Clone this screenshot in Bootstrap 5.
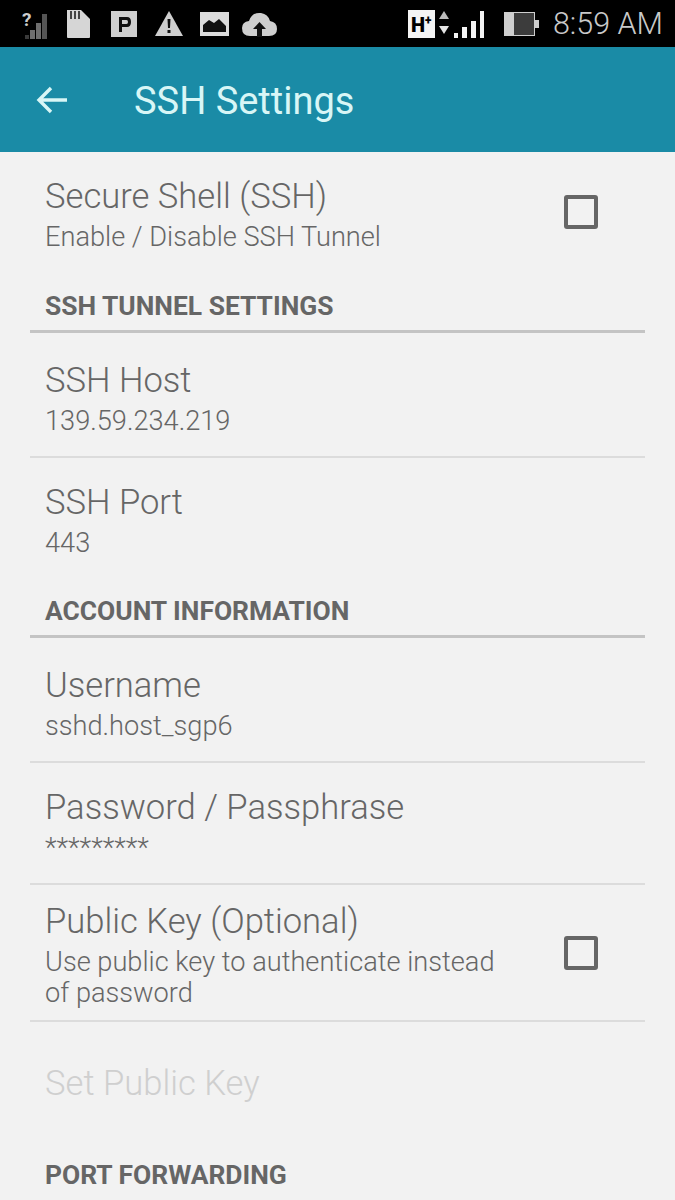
<!DOCTYPE html>
<html lang="en">
<head>
    <meta charset="UTF-8">
    <meta name="viewport" content="width=device-width, initial-scale=1.0">
    <title>SSH Settings</title>
    <link rel="stylesheet" href="https://cdn.jsdelivr.net/npm/bootstrap@5.3.3/dist/css/bootstrap.min.css">
    <style>
        html, body {
            height: 1200px;
            overflow: hidden;
        }

        body {
            background: #f2f2f2;
            font-family: Roboto, "Liberation Sans", sans-serif;
            color: #666;
        }

        .status-strip {
            height: 47px;
            background: #000;
            padding: 0 12px 0 22px;
        }

        .status-clock {
            color: #c9c9c9;
            font-size: 30.5px;
            font-weight: 300;
            line-height: 47px;
            margin-left: 14px;
        }

        .icon-signal { margin-right: 18px; }
        .icon-sd { margin-right: 20px; }
        .icon-parking { margin-right: 18px; }
        .icon-warning { margin-right: 17px; }
        .icon-picture { margin-right: 13px; }
        .icon-battery { margin-left: 19px; }

        .app-bar {
            height: 105px;
            background: #1a8ba6;
            color: #d8f6f6;
            padding-left: 36px;
        }

        .app-title {
            font-size: 38px;
            font-weight: 400;
            margin: 3px 0 0 66px;
            line-height: 1;
        }

        .pref-list {
            padding: 0 30px;
        }

        .pref-row {
            padding: 0 15px;
            border-bottom: 2px solid #dcdcdc;
        }

        .pref-row.no-line {
            border-bottom: 0;
        }

        .pref-name {
            font-size: 34.6px;
            font-weight: 300;
            line-height: 40px;
            color: #666;
        }

        .pref-value {
            font-size: 27.2px;
            font-weight: 300;
            line-height: 31px;
            margin-top: 5.5px;
            color: #666;
        }

        .pref-muted {
            color: #cfcfcf;
        }

        .pref-box {
            width: 34px;
            height: 34px;
            border: 4px solid #666;
            border-radius: 3px;
            flex: none;
            margin-right: 32px;
        }

        .section-name {
            height: 42px;
            padding: 3px 15px 0;
            font-size: 26.4px;
            font-weight: 700;
            line-height: 30px;
            color: #666;
        }

        .section-rule {
            height: 3px;
            background: #c4c4c4;
        }

        .h-shell { height: 136px; padding-top: 24px; }
        .h-item { height: 125px; padding-top: 27px; }
        .h-port { height: 135px; padding-top: 24px; }
        .h-pass { height: 122px; padding-top: 24px; }
        .h-key { height: 137px; padding-top: 16px; }
        .h-disabled { height: 135px; padding-top: 41px; }
        .box-shell { margin-top: 19px; }
        .box-key { margin-top: 35px; }
    </style>
</head>
<body>

    <div class="status-strip d-flex align-items-center">
        <svg width="26" height="30" viewBox="0 0 26 30" class="icon-signal">
            <path d="M3 26 h4 v4 h-4 Z" fill="#3a3a3a"/>
            <path d="M8 21 h5 v9 h-5 Z" fill="#6e6e6e"/>
            <path d="M14 14 h5 v16 h-5 Z" fill="#6e6e6e"/>
            <path d="M20 5 h5 v25 h-5 Z" fill="#555"/>
            <text x="0" y="17" font-family="Roboto" font-size="19" font-weight="700" fill="#ccc">?</text>
        </svg>
        <svg width="25" height="28" viewBox="0 0 25 28" class="icon-sd">
            <path d="M1 0 H15 L24 9 V27 Q24 28 23 28 H2 Q1 28 1 27 Z" fill="#d6d6d6"/>
            <path d="M4 1 h2 v8 h-2 Z M8 1 h2 v8 h-2 Z M12 1 h2 v8 h-2 Z" fill="#444"/>
        </svg>
        <svg width="26" height="26" viewBox="0 0 26 26" class="icon-parking">
            <rect width="26" height="26" fill="#cfcfcf"/>
            <path fill-rule="evenodd" d="M8 6 H16 Q20 6 20 11 Q20 16 16 16 H11 V21 H8 Z M11 9 V13 H15.5 Q17 13 17 11 Q17 9 15.5 9 Z" fill="#111"/>
        </svg>
        <svg width="28" height="26" viewBox="0 0 28 26" class="icon-warning">
            <path d="M14 0 L28 25 H0 Z" fill="#cfcfcf"/>
            <path d="M12.5 8 h3 l-.5 9 h-2 Z M12.5 19 h3 v3 h-3 Z" fill="#111"/>
        </svg>
        <svg width="29" height="24" viewBox="0 0 29 24" class="icon-picture">
            <rect width="29" height="24" fill="#dcdcdc"/>
            <path d="M3 20 V13 L9 8 L14 11 L19 7 L26 14 V20 Z" fill="#111"/>
        </svg>
        <svg width="35" height="26" viewBox="0 0 35 26">
            <path d="M8 25 Q0 25 0 17 Q0 11 7 10 Q10 1 19 2 Q26 3 28 10 Q35 11 35 18 Q35 25 27 25 Z" fill="#cfcfcf"/>
            <path d="M17.5 11 L24 18 H20 V26 H15 V18 H11 Z" fill="#111"/>
        </svg>

        <div class="ms-auto d-flex align-items-center">
            <svg width="27" height="28" viewBox="0 0 27 28" class="me-1">
                <rect width="27" height="28" fill="#f4f4f4"/>
                <text x="3" y="22" font-family="Roboto" font-size="20" font-weight="900" fill="#000">H</text>
                <text x="17" y="14" font-family="Roboto" font-size="12" font-weight="900" fill="#000">+</text>
            </svg>
            <svg width="46" height="28" viewBox="0 0 46 28">
                <path d="M5 1 L10 9 H0 Z" fill="#bbb"/>
                <path d="M0 16 H10 L5 24 Z" fill="#e4e4e4"/>
                <path d="M15 23 h4 v5 h-4 Z M23 17 h5 v11 h-5 Z M32 11 h5 v17 h-5 Z M41 1 h4 v27 h-4 Z" fill="#f4f4f4"/>
            </svg>
            <svg width="35" height="24" viewBox="0 0 35 24" class="icon-battery">
                <rect x="0.5" y="0.5" width="30" height="23" fill="#3c3c3c" stroke="#cfcfcf"/>
                <rect width="10" height="24" fill="#cfcfcf"/>
                <rect x="31" y="8" width="4" height="8" fill="#cfcfcf"/>
            </svg>
            <span class="status-clock">8:59 AM</span>
        </div>
    </div>

    <header class="app-bar d-flex align-items-center">
        <svg width="32" height="30" viewBox="0 0 32 30">
            <path d="M31 15 H3 M15 3 L3 15 L15 27" fill="none" stroke="#d8f6f6" stroke-width="3.4"/>
        </svg>
        <h1 class="app-title">SSH Settings</h1>
    </header>

    <main class="pref-list">
        <div class="pref-row no-line h-shell d-flex justify-content-between">
            <div>
                <div class="pref-name">Secure Shell (SSH)</div>
                <div class="pref-value">Enable / Disable SSH Tunnel</div>
            </div>
            <div class="pref-box box-shell"></div>
        </div>

        <div class="section-name">SSH TUNNEL SETTINGS</div>
        <div class="section-rule"></div>

        <div class="pref-row h-item">
            <div class="pref-name">SSH Host</div>
            <div class="pref-value">139.59.234.219</div>
        </div>
        <div class="pref-row no-line h-port">
            <div class="pref-name">SSH Port</div>
            <div class="pref-value">443</div>
        </div>

        <div class="section-name">ACCOUNT INFORMATION</div>
        <div class="section-rule"></div>

        <div class="pref-row h-item">
            <div class="pref-name">Username</div>
            <div class="pref-value">sshd.host_sgp6</div>
        </div>
        <div class="pref-row h-pass">
            <div class="pref-name">Password / Passphrase</div>
            <div class="pref-value">*********</div>
        </div>
        <div class="pref-row h-key d-flex justify-content-between">
            <div>
                <div class="pref-name">Public Key (Optional)</div>
                <div class="pref-value">Use public key to authenticate instead<br>of password</div>
            </div>
            <div class="pref-box box-key"></div>
        </div>
        <div class="pref-row no-line h-disabled">
            <div class="pref-name pref-muted">Set Public Key</div>
        </div>

        <div class="section-name">PORT FORWARDING</div>
    </main>

    <script src="https://cdn.jsdelivr.net/npm/bootstrap@5.3.3/dist/js/bootstrap.bundle.min.js"></script>
</body>
</html>
